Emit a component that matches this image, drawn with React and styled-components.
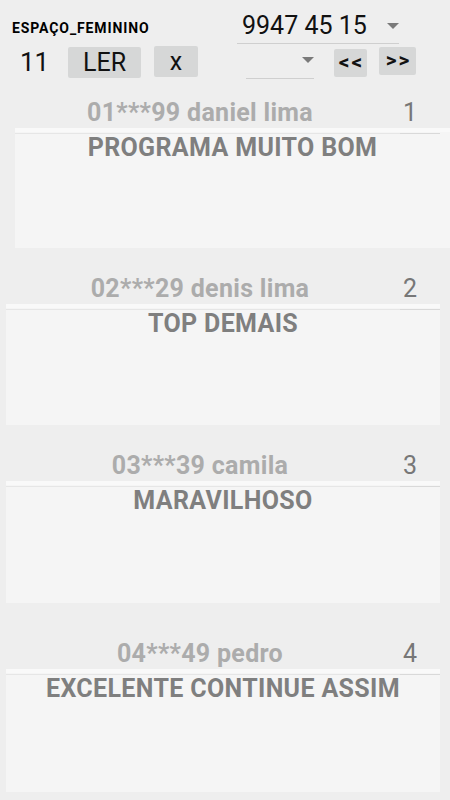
import React from "react";
import styled, { createGlobalStyle } from "styled-components";

const Global = createGlobalStyle`
  html, body { margin: 0; padding: 0; background: #eeeeee; }
  * { box-sizing: border-box; }
`;

const Page = styled.div`
  width: 450px;
  height: 800px;
  overflow: hidden;
  background: #eeeeee;
  font-family: Roboto, "Liberation Sans", sans-serif;
  color: #111;
`;

const Header = styled.header`
  display: grid;
  grid-template-columns: 225px 225px;
  height: 86px;
`;

const LeftCol = styled.div`
  display: flex;
  flex-direction: column;
`;

const Title = styled.div`
  margin: 20px 0 0 12px;
  font-size: 14px;
  line-height: 16px;
  font-weight: 700;
  letter-spacing: 0.9px;
  color: #000;
`;

const Controls = styled.div`
  display: flex;
  align-items: center;
  margin-top: 11px;
  height: 31px;
`;

const Count = styled.span`
  font-size: 26px;
  line-height: 31px;
  margin-left: 20px;
  width: 48px;
  color: #111;
`;

const GrayButton = styled.button`
  display: flex;
  align-items: center;
  justify-content: center;
  width: ${(p) => p.$w}px;
  height: 31px;
  margin-top: ${(p) => p.$dy || 0}px;
  margin-right: ${(p) => p.$mr || 0}px;
  padding: 0;
  border: none;
  border-radius: 2px;
  background: #d6d7d7;
  font-family: inherit;
  font-size: 25px;
  color: #111;
`;

const RightCol = styled.div`
  display: flex;
  flex-direction: column;
`;

const Spinner = styled.div`
  display: flex;
  align-items: ${(p) => (p.$top ? "flex-start" : "center")};
  margin: ${(p) => p.$m};
  width: ${(p) => p.$w}px;
  height: ${(p) => p.$h}px;
  padding-top: ${(p) => p.$pt || 0}px;
  border-bottom: 1px solid #cfcfcf;
`;

const SpinnerText = styled.span`
  font-size: 25px;
  line-height: 29px;
  margin-left: 5px;
  color: #111;
`;

const Caret = styled.span`
  margin-left: auto;
  width: 0;
  height: 0;
  border-left: 6px solid transparent;
  border-right: 6px solid transparent;
  border-top: 6px solid #7a7a7a;
`;

const NavRow = styled.div`
  display: flex;
  align-items: flex-start;
  margin-top: 3px;
`;

const NavButton = styled.button`
  display: flex;
  align-items: center;
  justify-content: center;
  width: ${(p) => p.$w}px;
  height: 28px;
  margin-top: ${(p) => p.$dy}px;
  margin-left: ${(p) => p.$ml}px;
  padding: 0 0 2px 2px;
  border: none;
  border-radius: 2px;
  background: #d6d7d7;
  font-family: inherit;
  font-weight: 700;
  font-size: 21px;
  letter-spacing: 2px;
  color: #111;
`;

const List = styled.main`
  display: flex;
  flex-direction: column;
`;

const Section = styled.section`
  margin-top: ${(p) => p.$mt}px;
`;

const NameRow = styled.div`
  display: grid;
  grid-template-columns: 400px 40px;
  height: 30px;
  align-items: center;
`;

const Name = styled.div`
  text-align: center;
  font-size: 25px;
  line-height: 30px;
  font-weight: 700;
  letter-spacing: 0.3px;
  color: #acacac;
`;

const Number = styled.div`
  padding-left: 3px;
  font-size: 25px;
  line-height: 30px;
  color: #777;
`;

const Card = styled.div`
  position: relative;
  margin-left: ${(p) => p.$left}px;
  width: ${(p) => p.$width}px;
  height: ${(p) => p.$h}px;
  padding-top: 5px;
  background: linear-gradient(#f9f9f9 0, #f9f9f9 4px, #f5f5f5 4px);
  text-align: center;
  font-size: 25px;
  line-height: 29px;
  font-weight: 700;
  letter-spacing: 0.35px;
  color: #7f7f7f;

  &::before {
    content: "";
    position: absolute;
    top: 5px;
    left: 0;
    width: ${(p) => 400 - p.$left}px;
    height: 1px;
    background: #e6e6e6;
  }
  &::after {
    content: "";
    position: absolute;
    top: 5px;
    left: ${(p) => 400 - p.$left}px;
    width: 40px;
    height: 1px;
    background: #d9d9d9;
  }
`;

const items = [
  { mt: 12, name: "01***99 daniel lima", n: 1, text: "PROGRAMA MUITO BOM", left: 15, width: 435, h: 120 },
  { mt: 26, name: "02***29 denis lima", n: 2, text: "TOP DEMAIS", left: 6, width: 434, h: 121 },
  { mt: 26, name: "03***39 camila", n: 3, text: "MARAVILHOSO", left: 6, width: 434, h: 122 },
  { mt: 36, name: "04***49 pedro", n: 4, text: "EXCELENTE CONTINUE ASSIM", left: 6, width: 434, h: 123 },
];

export default function App() {
  return (
    <Page>
      <Global />
      <Header>
        <LeftCol>
          <Title>ESPAÇO_FEMININO</Title>
          <Controls>
            <Count>11</Count>
            <GrayButton $w={73} $mr={13}>LER</GrayButton>
            <GrayButton $w={44} $dy={-2}>x</GrayButton>
          </Controls>
        </LeftCol>
        <RightCol>
          <Spinner $m="8px 0 0 12px" $w={162} $h={36}>
            <SpinnerText>9947 45 15</SpinnerText>
            <Caret />
          </Spinner>
          <NavRow>
            <Spinner $m="0 0 0 21px" $w={68} $h={32} $top $pt={10}>
              <Caret />
            </Spinner>
            <NavButton $w={33} $dy={2} $ml={20}>&lt;&lt;</NavButton>
            <NavButton $w={37} $dy={0} $ml={12}>&gt;&gt;</NavButton>
          </NavRow>
        </RightCol>
      </Header>
      <List>
        {items.map((it) => (
          <Section key={it.n} $mt={it.mt}>
            <NameRow>
              <Name>{it.name}</Name>
              <Number>{it.n}</Number>
            </NameRow>
            <Card $left={it.left} $width={it.width} $h={it.h}>
              {it.text}
            </Card>
          </Section>
        ))}
      </List>
    </Page>
  );
}
